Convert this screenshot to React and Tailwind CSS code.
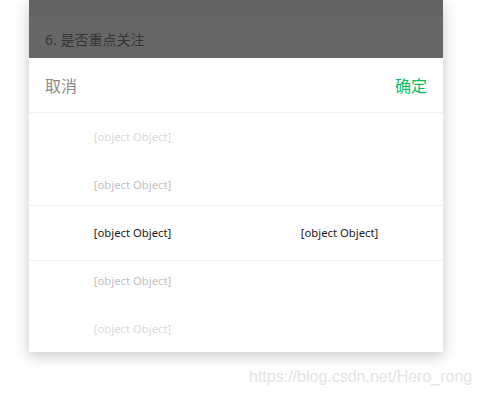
import React from "react";

const cols = [
  ["[object Object]", "[object Object]", "[object Object]", "[object Object]", "[object Object]"],
  ["", "", "[object Object]", "", ""],
];

const rowColor = ["text-[#d9d9d9]", "text-[#c2c2c2]", "text-[#222]", "text-[#c2c2c2]", "text-[#dcdcdc]"];

const App = () => {
  return (
    <div className="w-[478px] h-[395px] bg-white relative overflow-hidden" style={{ fontFamily: "'Noto Sans', 'Noto Sans CJK SC', sans-serif" }}>
      <div className="ml-[29px] w-[414px] bg-white shadow-[0_4px_14px_rgba(0,0,0,0.22)]">
        <div className="h-[16px] bg-[#626262]" />
        <div className="h-[42px] bg-[#666666] flex items-center pl-[16px] pt-[4px] text-[14px] text-[#363636]">
          6. 是否重点关注
        </div>
        <div className="h-[55px] flex items-center justify-between px-[16px] pt-[2px] border-b border-[#f0f0f0]">
          <span className="text-[16px] text-[#8a8a8a]">取消</span>
          <span className="text-[16px] text-[#07c160]">确定</span>
        </div>
        <div className="relative flex h-[239px] overflow-hidden">
          {cols.map((col, ci) => (
            <div key={ci} className="flex-1 flex flex-col">
              {col.map((t, ri) => (
                <div key={ri} className={`h-[48px] shrink-0 flex items-center justify-center text-[11.3px] ${rowColor[ri]}`}>
                  {t}
                </div>
              ))}
            </div>
          ))}
          <div className="absolute left-0 right-0 top-[92px] h-[56px] border-y border-[#f0f0f0] pointer-events-none" />
        </div>
      </div>
      <div className="absolute left-[249px] top-[365px] text-[16px] text-[#e4e4e4]" style={{ fontFamily: "'Liberation Sans', Arial, sans-serif" }}>
        https://blog.csdn.net/Hero_rong
      </div>
    </div>
  );
};

export default App;
